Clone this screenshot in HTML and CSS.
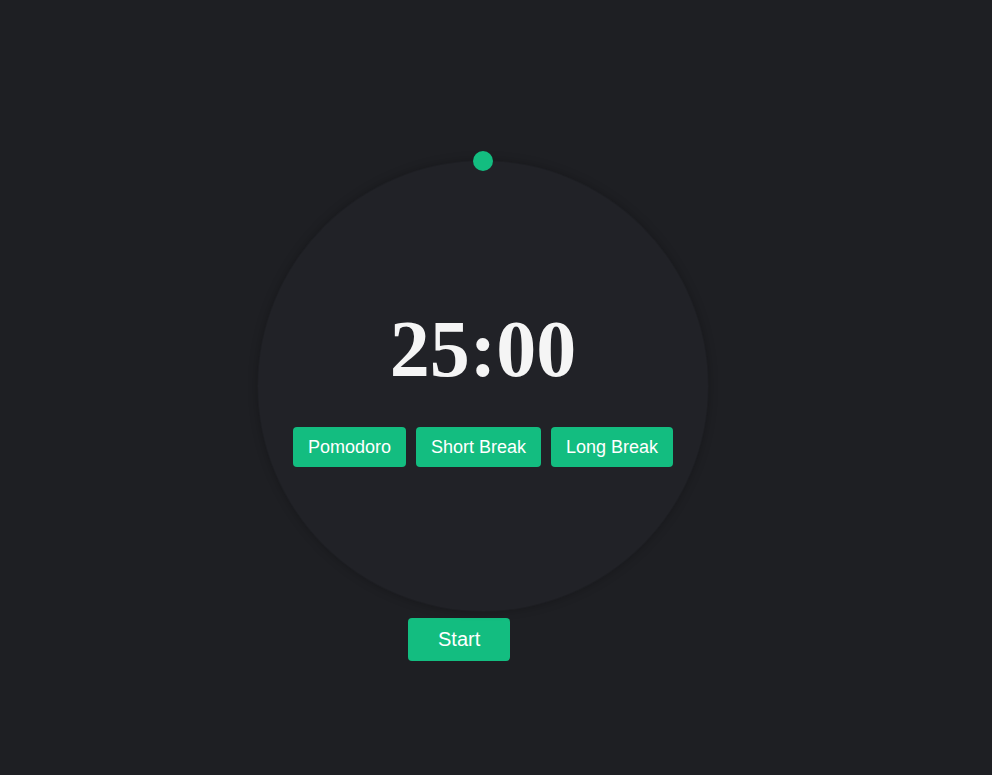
FILE: index.html
```html
<!DOCTYPE html>
<html lang="en">
<head>
<meta charset="utf-8">
<title>Pomodoro Timer</title>
<link rel="stylesheet" href="styles.css">
</head>
<body>
<main class="app">
  <div class="dial">
    <span class="knob"></span>
    <div class="dial-content">
      <h1 class="time">25:00</h1>
      <div class="modes">
        <button class="btn mode">Pomodoro</button>
        <button class="btn mode">Short Break</button>
        <button class="btn mode">Long Break</button>
      </div>
    </div>
  </div>
  <button class="btn start">Start</button>
</main>
</body>
</html>
```

FILE: styles.css
```css
html, body {
  margin: 0;
  padding: 0;
}
body {
  background: #1e1f23;
  height: 100vh;
  font-family: "Liberation Sans", Arial, sans-serif;
}
.app {
  display: flex;
  flex-direction: column;
  align-items: flex-start;
  padding: 161px 0 0 258px;
}
.dial {
  position: relative;
  width: 450px;
  height: 450px;
  border-radius: 50%;
  background: #212227;
  box-shadow: 0 0 0 1px #1d1e22, 0 0 8px 2px rgba(0, 0, 0, 0.18);
  display: flex;
  align-items: center;
  justify-content: center;
}
.knob {
  position: absolute;
  top: -10px;
  left: 215px;
  width: 20px;
  height: 20px;
  border-radius: 50%;
  background: #13bd80;
}
.dial-content {
  display: flex;
  flex-direction: column;
  align-items: center;
  gap: 33px;
}
.time {
  margin: 0;
  font-family: "Liberation Serif", "Times New Roman", serif;
  font-weight: bold;
  font-size: 80px;
  line-height: 89px;
  color: #f5f5f5;
}
.modes {
  display: flex;
  gap: 10px;
}
.btn {
  border: none;
  background: #13bd80;
  color: #ffffff;
  font-family: "Liberation Sans", Arial, sans-serif;
  border-radius: 4px;
  cursor: pointer;
}
.mode {
  font-size: 18px;
  height: 40px;
  padding: 0 15px;
}
.start {
  margin: 7px 0 0 150px;
  font-size: 20px;
  height: 43px;
  padding: 0 30px;
  border-radius: 4px;
}
```
